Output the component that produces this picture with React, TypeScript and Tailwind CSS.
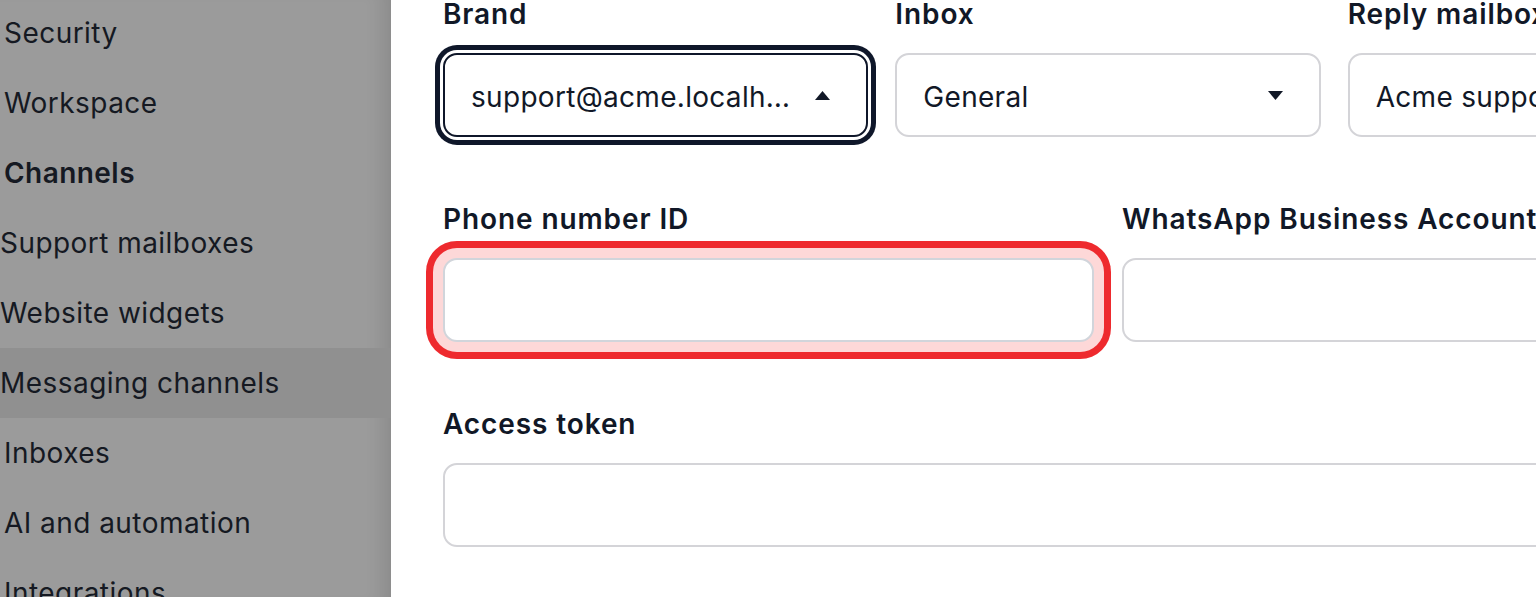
import React from 'react';

const navItems = [
  { label: 'Security', indent: true },
  { label: 'Workspace', indent: true },
  { label: 'Channels', indent: true, heading: true },
  { label: 'Support mailboxes' },
  { label: 'Website widgets' },
  { label: 'Messaging channels', active: true },
  { label: 'Inboxes', indent: true },
  { label: 'AI and automation', indent: true },
  { label: 'Integrations', indent: true },
];

function Caret({ up }: { up?: boolean }) {
  return (
    <svg width="15" height="9" viewBox="0 0 15 9" className="shrink-0 text-[#111827]">
      {up ? <polygon points="7.5,0 15,9 0,9" fill="currentColor" /> : <polygon points="0,0 15,0 7.5,9" fill="currentColor" />}
    </svg>
  );
}

function Label({ children }: { children: React.ReactNode }) {
  return (
    <div className="mb-[19px] whitespace-nowrap text-[28px] font-semibold leading-[40px] tracking-[0.9px] text-[#111827]">
      {children}
    </div>
  );
}

function Select({ value, open }: { value: string; open?: boolean }) {
  return (
    <div
      className={
        open
          ? 'flex h-[84px] items-center gap-[22px] rounded-[14px] border-2 border-[#0f172a] bg-white pl-[26px] pr-[36px] ring-[5px] ring-[#0f172a] ring-offset-[3px] ring-offset-white'
          : 'flex h-[84px] items-center gap-[22px] rounded-[14px] border-2 border-[#d4d4d8] bg-white pl-[26px] pr-[36px]'
      }
    >
      <span className="min-w-0 flex-1 truncate pt-[4px] text-[28px] leading-[40px] tracking-[0.3px] text-[#111827]">{value}</span>
      <Caret up={open} />
    </div>
  );
}

function Input({ error }: { error?: boolean }) {
  return (
    <div
      className={
        error
          ? 'h-[84px] rounded-[14px] border-2 border-[#d1d5db] bg-white ring-[7px] ring-[#ee2a2e] ring-offset-[10px] ring-offset-[#fdd8d8]'
          : 'h-[84px] rounded-[14px] border-2 border-[#d4d4d8] bg-white'
      }
    />
  );
}

export default function App() {
  return (
    <div className="flex h-[597px] w-[1536px] overflow-hidden bg-white font-['Inter',sans-serif]">
      <aside className="w-[391px] shrink-0 overflow-hidden bg-[#9b9b9b] shadow-[inset_-22px_0_18px_-14px_rgba(0,0,0,0.10)]">
        <nav className="-mt-[2px] flex flex-col">
          {navItems.map((item) => (
            <div
              key={item.label}
              className={
                (item.active ? 'bg-[#909090] ' : '') +
                'flex h-[70px] shrink-0 items-center whitespace-nowrap text-[28px] leading-[40px] tracking-[0.45px] text-[#151922] ' +
                (item.indent ? 'pl-[4px] ' : 'pl-0 ') +
                (item.heading ? 'font-semibold' : 'font-normal')
              }
            >
              {item.label}
            </div>
          ))}
        </nav>
      </aside>

      <main className="min-w-0 flex-1 overflow-hidden pl-[52px]">
        <div className="-mt-[6px] flex w-[1330px] flex-col gap-[62px]">
          <div className="grid grid-cols-3 gap-x-[27px]">
            <div>
              <Label>Brand</Label>
              <Select value="support@acme.localhost" open />
            </div>
            <div>
              <Label>Inbox</Label>
              <Select value="General" />
            </div>
            <div>
              <Label>Reply mailbox</Label>
              <Select value="Acme support" />
            </div>
          </div>

          <div className="grid grid-cols-2 gap-x-[28px]">
            <div>
              <Label>Phone number ID</Label>
              <Input error />
            </div>
            <div>
              <Label>WhatsApp Business Account ID</Label>
              <Input />
            </div>
          </div>

          <div>
            <Label>Access token</Label>
            <Input />
          </div>
        </div>
      </main>
    </div>
  );
}
